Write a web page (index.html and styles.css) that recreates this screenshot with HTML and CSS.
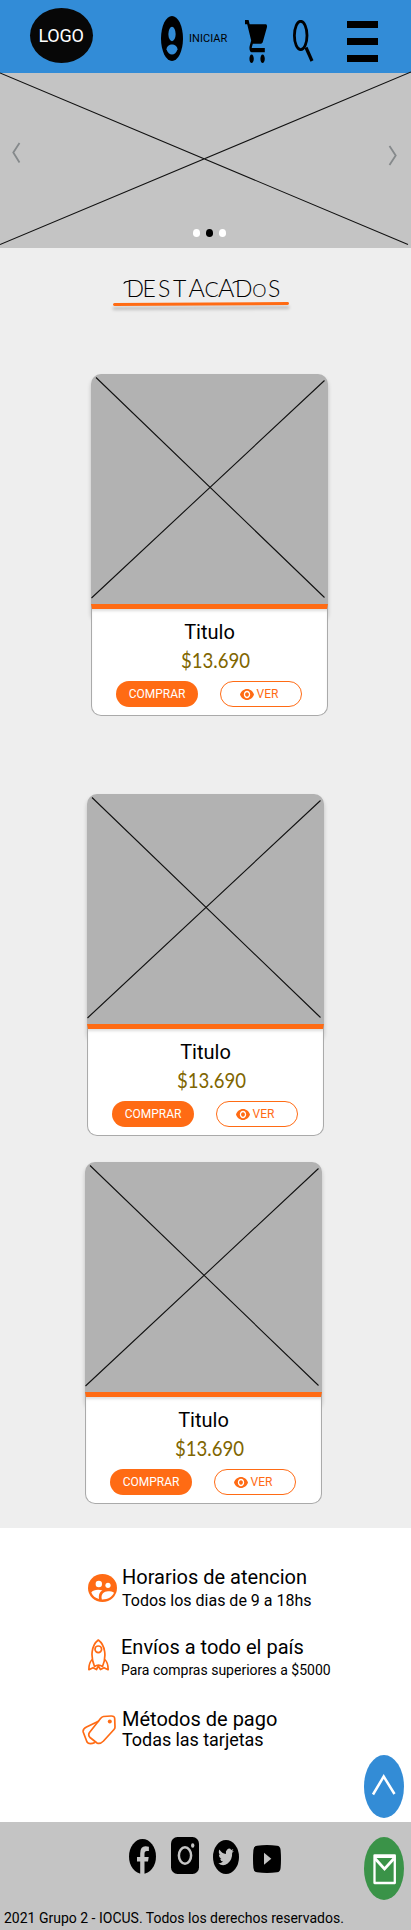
FILE: index.html
```html
<!DOCTYPE html>
<html lang="es">
<head>
<meta charset="utf-8">
<title>IOCUS</title>
<link rel="stylesheet" href="styles.css">
</head>
<body>
<svg class="defs" width="0" height="0">
  <symbol id="placeholder" viewBox="0 0 237 230"><path d="M5 3.5 233.5 223.5M233.5 6.5.5 224" stroke="#111" stroke-width="1.1" fill="none"/></symbol>
  <symbol id="eye" viewBox="1 4.5 22 15" preserveAspectRatio="none"><path fill="#ff6b14" d="M12 4.5C7 4.5 2.73 7.61 1 12c1.73 4.39 6 7.5 11 7.5s9.27-3.11 11-7.5c-1.73-4.39-6-7.5-11-7.5zM12 17c-2.76 0-5-2.24-5-5s2.24-5 5-5 5 2.24 5 5-2.24 5-5 5zm0-8c-1.66 0-3 1.34-3 3s1.34 3 3 3 3-1.34 3-3-1.34-3-3-3z"/></symbol>
</svg>
<header class="header">
  <div class="logo">LOGO</div>
  <svg class="user" viewBox="2 2 20 20" preserveAspectRatio="none"><ellipse cx="12" cy="12" rx="10" ry="10"/><ellipse cx="12" cy="10" rx="3.3" ry="3.2" fill="#328cd7"/><path d="M7 16.8C7.3 13.9 16.7 13.9 17 16.8 15.3 19.9 8.700 19.900 7 16.800z" fill="#328cd7"/></svg>
  <span class="login">INICIAR</span>
  <svg class="cart" viewBox="1 2 20 20" preserveAspectRatio="none"><path d="M7 18c-1.1 0-1.99.9-1.99 2S5.9 22 7 22s2-.9 2-2-.9-2-2-2zM1 2v2h2l3.600 7.590-1.350 2.450c-.16.28-.25.61-.25.96 0 1.100.9 2 2 2h12v-2H7.420c-.14 0-.25-.11-.25-.25l.03-.12.9-1.630h7.450c.75 0 1.410-.41 1.750-1.030l3.580-6.490A1 1 0 0 0 20 4H5.210l-.94-2H1zm16 16c-1.100 0-1.990.9-1.990 2s.89 2 1.990 2 2-.9 2-2-.9-2-2-2z"/></svg>
  <svg class="search" viewBox="0 0 21 43"><ellipse cx="7.700" cy="15.500" rx="6.300" ry="14.200" fill="none" stroke="#000" stroke-width="2.800"/><path d="M13 27.500 19 41" stroke="#000" stroke-width="3.200"/></svg>
  <div class="burger"><i></i><i></i><i></i></div>
</header>

<section class="carousel">
  <svg class="cross" viewBox="0 0 411 175"><path d="M0 0 408 171.500M411-1 0 171.500" stroke="#111" stroke-width="1.100" fill="none"/></svg>
  <svg class="prev" viewBox="0 0 9 21"><path d="M7.500 1 1.300 10.500 7.500 20.500"/></svg>
  <svg class="next" viewBox="0 0 9 21"><path d="M1.500 1 7.700 10.500 1.500 20"/></svg>
  <div class="dots"><i></i><i class="on"></i><i></i></div>
</section>

<main class="featured">
  <h1 class="heading">
    <svg viewBox="0 0 182 40"><text y="25.300" x="15.500 31.500 47 62 77.500 93.500 107 124 141.300 157">DEST<tspan class="tall">A</tspan><tspan class="narrow">C</tspan><tspan class="tall">A</tspan>D<tspan class="small">O</tspan>S</text><path class="swash" d="M13 11.300Q14 9.300 18 9.300M122 11Q123.500 9.300 126.500 9.300"/><path class="shade" d="M3 36.500 177 35.500"/><path class="rule" d="M3.500 32.500 176.500 31.500"/></svg>
  </h1>

  <article class="card first">
    <div class="photo"><svg><use href="#placeholder"/></svg></div>
    <div class="info">
      <h2>Titulo</h2>
      <svg class="price" viewBox="0 0 70 26"><text x="1" y="19" textLength="69" lengthAdjust="spacingAndGlyphs">$13.690</text></svg>
      <div class="actions"><a class="btn buy">COMPRAR</a><a class="btn view"><svg><use href="#eye"/></svg>VER</a></div>
    </div>
  </article>

  <article class="card second">
    <div class="photo"><svg><use href="#placeholder"/></svg></div>
    <div class="info">
      <h2>Titulo</h2>
      <svg class="price" viewBox="0 0 70 26"><text x="1" y="19" textLength="69" lengthAdjust="spacingAndGlyphs">$13.690</text></svg>
      <div class="actions"><a class="btn buy">COMPRAR</a><a class="btn view"><svg><use href="#eye"/></svg>VER</a></div>
    </div>
  </article>

  <article class="card third">
    <div class="photo"><svg><use href="#placeholder"/></svg></div>
    <div class="info">
      <h2>Titulo</h2>
      <svg class="price" viewBox="0 0 70 26"><text x="1" y="19" textLength="69" lengthAdjust="spacingAndGlyphs">$13.690</text></svg>
      <div class="actions"><a class="btn buy">COMPRAR</a><a class="btn view"><svg><use href="#eye"/></svg>VER</a></div>
    </div>
  </article>
</main>

<section class="services">
  <div class="service hours">
    <svg class="icon" viewBox="0 0 29 28"><ellipse cx="14.500" cy="14" rx="14.500" ry="14" fill="#ff6b14"/><g fill="#fff"><circle cx="10.800" cy="10" r="3.200"/><circle cx="20" cy="11.300" r="2.600"/><path d="M3.300 18.500C5 16 10 14.900 14.500 16.500 11.500 18 10.500 20.500 11 25 7.500 24.200 4.500 21.800 3.300 18.500z"/><path d="M13.800 25.400C12.500 20 16 17.300 20 17.300 22.500 17.300 24.600 17.800 26 18.700 24 23 19.500 25.600 13.800 25.400z"/></g></svg>
    <div><h3>Horarios de atencion</h3><p>Todos los dias de 9 a 18hs</p></div>
  </div>
  <div class="service shipping">
    <svg class="icon" viewBox="0 0 21 32"><g fill="none" stroke="#ff6b14" stroke-width="1.700" stroke-linejoin="round"><path d="M6.500 27.500C2.500 18 3 6.500 10.300 1 17.700 6.500 18.500 18 14.500 27.500 12 25.700 9 25.700 6.500 27.500z"/><circle cx="10.300" cy="10.300" r="3.300"/><path d="M4.200 20.500C1.500 23 .8 26 .9 30.700L5 28.700 8.500 30.500 10.300 27 12.500 30.500 16 28.700 20.100 30.700C20.200 26 19.500 23 16.800 20.500"/></g></svg>
    <div><h3>Envíos a todo el país</h3><p>Para compras superiores a $5000</p></div>
  </div>
  <div class="service payment">
    <svg class="icon" viewBox="0 0 34 30"><g fill="none" stroke="#ff6b14" stroke-width="1.700" stroke-linejoin="round"><path d="M21.500 1.500 29 1Q32.800.8 32.700 4L33 12Q33 13.500 32 14.500L21.500 26Q18 29.500 15 28L8 22.500Q5.800 20 7.500 17.500L18.500 3.500Q20 1.700 21.500 1.500z"/><path d="M17 6 4.500 12Q.5 14 1.200 17L5 27Q7 30 13 27.500"/></g><circle cx="27.800" cy="6.500" r="2" fill="#ff6b14"/></svg>
    <div><h3>Métodos de pago</h3><p>Todas las tarjetas</p></div>
  </div>
</section>

<footer class="footer">
  <div class="social">
    <svg class="fb" viewBox="0 0 27 35"><ellipse cx="13.500" cy="17.500" rx="13.500" ry="17.500"/><path fill="#c4c4c4" d="M11.200 35V22.500H8V18h3.200V14.500Q11.200 7.300 16.500 7.300 18.500 7.300 19.900 7.700V12H17.800Q15.500 12 15.500 14.700V18h4.200L19 22.500H15.500V35z"/></svg>
    <svg class="ig" viewBox="0 0 28 37"><rect width="28" height="37" rx="6.500"/><ellipse cx="14" cy="18.500" rx="6.100" ry="8.200" fill="none" stroke="#c4c4c4" stroke-width="2.500"/><ellipse cx="21.700" cy="8.500" rx="1.700" ry="2.300" fill="#c4c4c4"/></svg>
    <svg class="tw" viewBox="0 0 26 34"><ellipse cx="13" cy="17" rx="13" ry="17"/><path fill="#c4c4c4" transform="translate(5.300 8.500) scale(.645 .84)" d="M24 2.600a10 10 0 0 1-2.800.8A5 5 0 0 0 23.300.7a10 10 0 0 1-3.100 1.200A4.900 4.900 0 0 0 11.800 6.400 14 14 0 0 1 1.700 1.200 4.900 4.900 0 0 0 3.200 7.800a5 5 0 0 1-2.200-.6A4.900 4.900 0 0 0 4.900 12a5 5 0 0 1-2.200.1A4.900 4.900 0 0 0 7.300 15.500 10 10 0 0 1 0 17.600 14 14 0 0 0 21.500 5.100 10 10 0 0 0 24 2.600z"/></svg>
    <svg class="yt" viewBox="0 0 28 28"><path d="M4 .8Q14-.8 24 .8 27.300 1 27.600 5 28.400 14 27.600 23 27.300 27 24 27.300 14 28.700 4 27.300.7 27 .4 23-.4 14 .4 5 .7 1 4 .8z"/><path d="M11 7.800v12L18.300 13.800z" fill="#c4c4c4"/></svg>
  </div>
  <p class="copy">2021 Grupo 2 - IOCUS. Todos los derechos reservados.</p>
</footer>

<nav class="floating">
  <svg class="up" viewBox="0 0 40 63"><ellipse cx="20" cy="31.500" rx="20" ry="31.500" fill="#338cd6"/><path d="M9 39.500 19.700 21.500 30.500 39" stroke="#fff" stroke-width="2.500" fill="none"/></svg>
  <svg class="mail" viewBox="0 0 40 63"><ellipse cx="20" cy="31.500" rx="20" ry="31.500" fill="#3a9348"/><path fill="none" stroke="#fff" stroke-width="2.300" d="M10.500 18.500H30.800V46H10.500z" stroke-linejoin="round"/><path d="M10.500 19.500h20.300M11 21.500 20.500 32 30 21.500" fill="none" stroke="#fff" stroke-width="2.800"/></svg>
</nav>
</body>
</html>
```
FILE: styles.css
```css
* { box-sizing: border-box; }
body { margin: 0; width: 411px; position: relative; font-family: Roboto, "Liberation Sans", sans-serif; color: #000; background: #fff; }
h1, h2, h3, p { margin: 0; font-weight: 400; }
svg { display: block; flex: none; }
.defs { position: absolute; }

.header { height: 73px; background: #328cd7; display: flex; align-items: flex-start; padding-left: 30px; }
.logo { width: 63px; height: 55px; margin-top: 8px; padding-right: 1px; border-radius: 50%; background: #070707; color: #fff; font-size: 18px; letter-spacing: -.3px; line-height: 56px; text-align: center; }
.user { width: 22px; height: 45px; margin: 16px 0 0 68px; }
.login { width: 39px; margin: 31px 0 0 6px; font-size: 11px; line-height: 15px; letter-spacing: .05px; }
.cart { width: 22px; height: 43px; margin: 20px 0 0 17px; }
.search { width: 21px; height: 43px; margin: 20px 0 0 26px; }
.burger { width: 31px; margin: 21px 0 0 33px; display: grid; gap: 10px; }
.burger i { height: 7px; background: #000; }

.carousel { height: 175px; background: #c4c4c4; position: relative; }
.cross { width: 411px; height: 175px; overflow: visible; }
.prev, .next { position: absolute; width: 9px; height: 21px; fill: none; stroke: #85898b; stroke-width: 1.8; }
.prev { left: 12px; top: 69px; }
.next { right: 14px; top: 72px; }
.dots { position: absolute; left: 192.5px; top: 156px; display: flex; gap: 6px; }
.dots i { width: 7px; height: 7.6px; border-radius: 50%; background: #fff; }
.dots .on { background: #000; }

.featured { height: 1280px; background: #eee; display: flow-root; }
.heading { margin: 24px 0 0 111px; }
.heading svg { width: 182px; height: 40px; overflow: visible; }
.heading text { font-family: Lato, sans-serif; font-weight: 300; font-size: 23px; }
.heading .tall { font-size: 25px; }
.heading .narrow { font-size: 21px; }
.heading .small { font-size: 18px; }
.heading path { stroke-width: 3; stroke-linecap: round; }
.heading .swash { fill: none; stroke: #000; stroke-width: 1.1; }
.rule { stroke: #ff6b14; }
.shade { stroke: #0003; filter: blur(1.5px); }

.card { width: 237px; height: 342px; }
.first { margin: 62px 0 0 91px; }
.second { margin: 78px 0 0 87px; }
.third { margin: 26px 0 0 85px; }
.photo { height: 246px; background: #b2b2b2; border-radius: 10px; box-shadow: 0 3px 4px #0003; }
.photo svg { width: 237px; height: 230px; }
.info { position: relative; height: 112px; margin-top: -16px; background: #fff; border: 1px solid #aaa; border-top: 5px solid #ff6b14; border-radius: 0 0 10px 10px; text-align: center; box-shadow: inset 0 3px 3px -1px #0002; }
.info h2 { padding-top: 11px; font-size: 20px; line-height: 24px; }
.price { width: 70px; height: 26px; margin: 5px 0 0 87.5px; overflow: visible; }
.price text { font: 21px Lato, sans-serif; fill: #806600; }
.actions { display: flex; gap: 22px; margin: 6px 0 0 24px; }
.btn { width: 82px; height: 26px; border-radius: 13px; font-size: 12px; line-height: 26px; }
.buy { background: #ff6b14; color: #fff; }
.view { border: 1px solid #ff6b14; color: #ff6b14; display: flex; align-items: center; gap: 3px; padding-left: 18.5px; line-height: 24px; }
.view svg { width: 14px; height: 11px; }

.services { height: 294px; padding: 36px 0 0 82px; }
.service { display: flex; align-items: flex-start; height: 70px; }
.service h3 { font-size: 20px; line-height: 26px; white-space: nowrap; }
.service p { white-space: nowrap; }
.hours .icon { width: 29px; height: 28px; margin: 10px 5px 0 6px; }
.hours p { font-size: 16px; line-height: 20px; margin-top: 1px; }
.shipping { height: 72px; }
.shipping .icon { width: 21px; height: 32px; margin: 5px 12px 0 6px; }
.shipping p { font-size: 14px; line-height: 18px; margin-top: 1px; }
.payment .icon { width: 34px; height: 30px; margin: 9px 6px 0 0; }
.payment p { font-size: 18px; line-height: 20px; margin-top: -2px; letter-spacing: -.05px; }

.footer { height: 108px; background: #c4c4c4; padding: 15px 0 0 4px; }
.social { display: flex; height: 37px; padding-left: 125px; }
.fb { width: 27px; height: 35px; margin-top: 2px; }
.ig { width: 28px; height: 37px; margin-left: 15px; }
.tw { width: 26px; height: 34px; margin: 3px 0 0 14px; }
.yt { width: 28px; height: 28px; margin: 8px 0 0 14px; }
.copy { margin-top: 35px; font-size: 14px; line-height: 18px; white-space: nowrap; }

.floating { position: absolute; left: 364px; top: 1755px; display: grid; gap: 19px; }
.floating svg { width: 40px; height: 63px; }
```
